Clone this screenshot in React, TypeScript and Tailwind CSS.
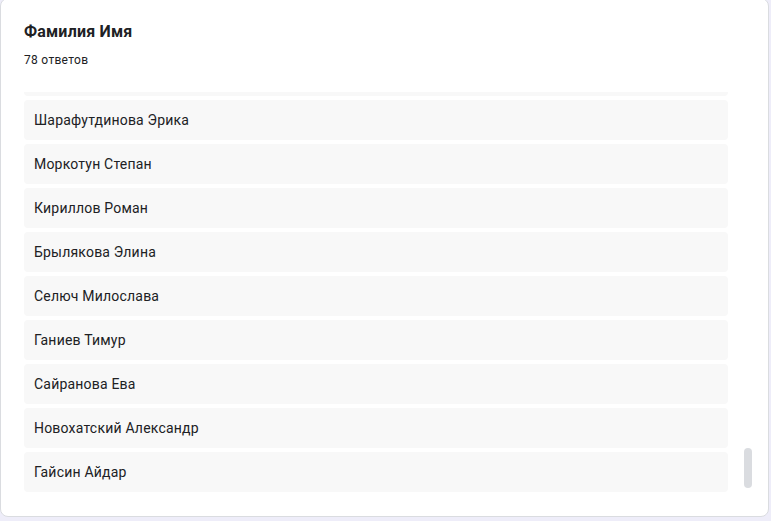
import React from "react";

const names = [
  "Хабибуллина Алина",
  "Шарафутдинова Эрика",
  "Моркотун Степан",
  "Кириллов Роман",
  "Брылякова Элина",
  "Селюч Милослава",
  "Ганиев Тимур",
  "Сайранова Ева",
  "Новохатский Александр",
  "Гайсин Айдар",
];

export default function App() {
  return (
    <div
      className="h-[521px] w-[771px] overflow-hidden bg-[#eeedf9]"
      style={{ fontFamily: "Roboto, 'Noto Sans', sans-serif" }}
    >
      <div className="mt-[-2px] h-[519px] w-[769px] rounded-lg border border-[#dadce0] bg-white pl-[23px] pr-4 pt-[21px]">
        <h2 className="text-base font-bold leading-6 tracking-[0.2px] text-[#202124]">Фамилия Имя</h2>
        <p className="mt-2 text-xs leading-4 tracking-[0.3px] text-[#202124]">78 ответов</p>

        {/* list viewport, scrolled to the bottom */}
        <div className="mt-6 flex h-[400px] gap-4">
          <div className="w-[704px] overflow-hidden">
            <div className="-mt-9 flex flex-col gap-1">
              {names.map((name) => (
                <div
                  key={name}
                  className="flex h-10 shrink-0 items-center rounded bg-[#f8f8f8] pl-2.5 text-sm tracking-[0.2px] text-[#202124]"
                >
                  {name}
                </div>
              ))}
            </div>
          </div>
          <div className="flex w-2 flex-col justify-end pb-1">
            <div className="h-10 rounded bg-[#dadce0]" />
          </div>
        </div>
      </div>
    </div>
  );
}
